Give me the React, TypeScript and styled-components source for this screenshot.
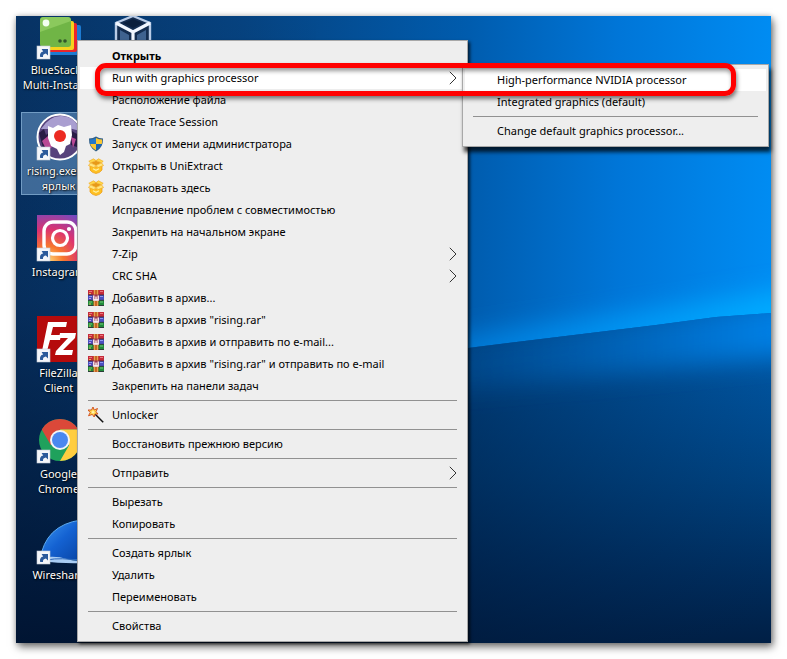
import React from "react";
import styled, { createGlobalStyle, css } from "styled-components";

const GlobalStyle = createGlobalStyle`
  * { box-sizing: border-box; }
  body { margin: 0; background: #fff; font-family: "Noto Sans", "Open Sans", sans-serif; font-size: 11px; }
  button { font: inherit; color: inherit; border: 0; background: none; padding: 0; }
`;

const Page = styled.main`
  display: flex;
  min-height: 100vh;
  padding: 16px;
`;

const Desktop = styled.section`
  position: relative;
  flex: 1;
  min-width: 0;
  background: #00254f;
  box-shadow: 2px 4px 8px rgba(0, 0, 0, 0.55), 0 0 5px rgba(0, 0, 0, 0.2);
`;

const Wallpaper = styled.svg`
  position: absolute;
  inset: 0;
  width: 100%;
  height: 100%;
  display: block;
`;

const IconArea = styled.div`
  position: relative;
  height: 627px;
  overflow: hidden;
  display: flex;
  align-items: flex-end;
`;

const IconGrid = styled.div`
  display: grid;
  grid-template-columns: 75px 75px;
  grid-auto-rows: 83px;
  row-gap: 18px;
  padding: 0 5px 44px;
`;

const Shortcut = styled.button<{ $selected?: boolean; $column: number }>`
  grid-column: ${(p) => p.$column};
  display: flex;
  flex-direction: column;
  align-items: center;
  gap: 2px;
  border: 1px solid transparent;
  ${(p) =>
    p.$selected &&
    css`
      background: rgba(130, 175, 220, 0.45);
      border-color: rgba(150, 190, 225, 0.6);
    `}
`;

const Picture = styled.svg`
  width: 48px;
  height: 48px;
  flex: none;
`;

const Caption = styled.span`
  color: #fff;
  line-height: 15px;
  text-align: center;
  white-space: pre;
  text-shadow: 1px 1px 2px #000, 0 0 1px #000;
`;

const panel = css`
  position: absolute;
  margin: 0;
  padding: 4px 2px;
  list-style: none;
  background: #eee;
  border: 1px solid #a8a8a8;
  color: #000;
`;

const Menu = styled.ul`
  ${panel}
  left: 61px;
  top: 24px;
  width: 391px;
  box-shadow: 2px 2px 3px rgba(0, 0, 0, 0.7);
`;

const Submenu = styled.ul`
  ${panel}
  left: 382px;
  top: -3px;
  width: 307px;
  box-shadow: 2px 5px 4px rgba(0, 0, 0, 0.75);
`;

const Entry = styled.li`
  position: relative;
`;

const Item = styled.button<{ $hot?: boolean; $bold?: boolean }>`
  display: grid;
  grid-template-columns: 16px 1fr 8px;
  column-gap: 8px;
  align-items: center;
  width: 100%;
  height: 22px;
  padding: 0 8px;
  line-height: 22px;
  text-align: left;
  white-space: nowrap;
  background: ${(p) => (p.$hot ? "#fff" : "transparent")};
  font-weight: ${(p) => (p.$bold ? 700 : 400)};
`;

const Glyph = styled.svg`
  width: 16px;
  height: 16px;
  grid-column: 1;
`;

const Text = styled.span`
  grid-column: 2;
`;

const Chevron = styled.svg`
  width: 8px;
  height: 14px;
  grid-column: 3;
`;

const Separator = styled.li`
  height: 1px;
  margin: 3px 8px;
  background: #919191;
`;

const Highlight = styled.div`
  position: absolute;
  left: 79px;
  top: 47px;
  width: 641px;
  height: 33px;
  border: 5px solid #ff0000;
  border-radius: 11px;
  pointer-events: none;
  box-shadow: 1px 3px 4px rgba(0, 0, 0, 0.5), inset 1px 3px 4px rgba(0, 0, 0, 0.4);
`;

const Arrow = () => (
  <g>
    <rect x="2" y="34" width="13" height="13" fill="#f4f6fa" stroke="#c4cbd6" strokeWidth=".6" />
    <path d="M5.2 45C4.5 41.5 6 39.8 8.2 39.4L6.6 37H13V43.4L10.9 41.6C8.8 42 7.8 43 8 45Z" fill="#2b5a9b" />
  </g>
);

const BlueStacks = () => (
  <Picture viewBox="0 0 48 48">
    <rect x="12" y="13" width="34" height="30" rx="2" fill="#1d7bd2" />
    <rect x="9" y="11" width="33" height="29" rx="2" fill="#e9262c" />
    <rect x="7" y="9" width="32" height="29" rx="2" fill="#f6d21d" />
    <rect x="5" y="5" width="31" height="30" rx="3" fill="#70b546" />
    <path d="M5 9Q5 5 9 5H32Q36 5 36 9L5 20Z" fill="#8bc95d" />
    <circle cx="11" cy="11" r="3.4" fill="#f3fff0" />
    <circle cx="25" cy="29" r="1.8" fill="#31552a" />
    <circle cx="30" cy="29" r="1.8" fill="#31552a" />
    <Arrow />
  </Picture>
);

const VirtualBox = () => (
  <Picture viewBox="0 0 48 48">
    <path d="M23 4L40 11V34L23 46L6 34V11Z" fill="#142d50" stroke="#b8cbe6" strokeWidth="2.4" />
    <path d="M6 11L23 20L40 11M23 20V46" fill="none" stroke="#f2f7ff" strokeWidth="3.2" />
    <path d="M10 18L19 23V36L10 30ZM36 18L27 23V36L36 30Z" fill="#3f628f" />
    <path d="M13 11L23 7L33 11L23 16Z" fill="#0b1f3c" />
  </Picture>
);

const Rising = () => (
  <Picture viewBox="0 0 48 48">
    <circle cx="25" cy="24" r="22.5" fill="#57437c" stroke="#fff" strokeWidth="2" />
    <path d="M6 16Q15 2 27 3Q41 4 45 18L30 14L18 16Z" fill="#a99ed0" />
    <path d="M4 20L9 16L11 22L16 18L14 31L8 35ZM34 16L40 20L45 22L42 34L36 32Z" fill="#291c45" />
    <path d="M7 28L13 23L17 34L12 38ZM36 24L41 26L38 35Z" fill="#b84995" />
    <path d="M13 13L18 15L23 12L29 14L36 12L37 22L35 31L31 33L29 39L25 42L22 36L16 33L13 25Z" fill="#fff" />
    <circle cx="25" cy="23" r="6" fill="#ec2b22" />
    <Arrow />
  </Picture>
);

const Instagram = () => (
  <Picture viewBox="0 0 48 48">
    <defs>
      <radialGradient id="insta" cx=".25" cy="1" r="1.15">
        <stop offset="0" stopColor="#fed576" />
        <stop offset=".28" stopColor="#f7772e" />
        <stop offset=".6" stopColor="#dc3270" />
        <stop offset="1" stopColor="#724bc2" />
      </radialGradient>
    </defs>
    <rect x="2" y="1" width="46" height="46" fill="url(#insta)" />
    <rect x="9" y="8" width="32" height="32" rx="9" fill="none" stroke="#fff" strokeWidth="3.4" />
    <circle cx="25" cy="24" r="7.5" fill="none" stroke="#fff" strokeWidth="3.2" />
    <circle cx="34" cy="15" r="2.1" fill="#fff" />
    <Arrow />
  </Picture>
);

const FileZilla = () => (
  <Picture viewBox="0 0 48 48">
    <rect x="2" y="1" width="46" height="46" fill="#b50b0c" />
    <path d="M13 7H32L31 12H18L16 20H26L25 25H15L12 36H7Z" fill="#fff" />
    <path d="M25 18H41L40 23L28 35H38L37 40H20L21 36L33 23H24Z" fill="#fff" />
    <Arrow />
  </Picture>
);

const Chrome = () => (
  <Picture viewBox="0 0 48 48">
    <circle cx="25" cy="24" r="21" fill="#1fa15c" />
    <path d="M6.8 13.5A21 21 0 0 1 43.2 13.5H25L15.9 29.2Z" fill="#db4839" />
    <path d="M43.2 13.5A21 21 0 0 1 25 45L34.1 29.2L25 13.5Z" fill="#ffcd40" />
    <circle cx="25" cy="24" r="10" fill="#f2f4f6" />
    <circle cx="25" cy="24" r="8" fill="#4a88ef" />
    <Arrow />
  </Picture>
);

const Wireshark = () => (
  <Picture viewBox="0 0 48 48">
    <defs>
      <linearGradient id="fin" x1="0" y1="0" x2="1" y2="1">
        <stop offset="0" stopColor="#3f9af2" />
        <stop offset=".5" stopColor="#1462d2" />
        <stop offset="1" stopColor="#0844a4" />
      </linearGradient>
    </defs>
    <path d="M5 43Q10 8 46 3Q41 17 47 43Z" fill="url(#fin)" stroke="#5ca9ee" strokeWidth="1" />
    <path d="M5 41Q20 38 32 42T48 42V46Q30 47 5 44Z" fill="#a9cdf4" />
    <path d="M12 43Q26 40 47 44" fill="none" stroke="#2b67b9" strokeWidth="1" />
    <Arrow />
  </Picture>
);

const Shield = () => (
  <Glyph viewBox="0 0 16 16">
    <path d="M8 .6Q11 2.6 15 2.6Q15.3 12 8 15.6Q.7 12 1 2.6Q5 2.6 8 .6Z" fill="#315f87" />
    <path d="M8 2V8H2.2Q1.8 6 2 3.6Q5 3.6 8 2Z" fill="#2478c9" />
    <path d="M8 2Q11 3.6 14 3.6Q14.2 6 13.8 8H8Z" fill="#fbc832" />
    <path d="M2.2 8H8V14.3Q3.6 12 2.2 8Z" fill="#fbc832" />
    <path d="M8 8H13.8Q12.4 12 8 14.3Z" fill="#1b66b6" />
  </Glyph>
);

const Carton = () => (
  <Glyph viewBox="0 0 16 16">
    <path d="M2 7L8 9L14 7V12Q12 15 8 15.5Q4 15 2 12Z" fill="#ffc022" stroke="#e8960f" strokeWidth=".7" />
    <path d="M2.5 4.8L8 2.8L13.5 4.8L8 7.5Z" fill="#e79a18" />
    <path d="M2.5 4.8L.5 7.5L6 9.6L8 7.5ZM13.5 4.8L15.5 7.5L10 9.6L8 7.5Z" fill="#ffe680" stroke="#f2ac22" strokeWidth=".7" />
    <path d="M2.5 4.8L.8 3.3L5.5 .8L8 2.6ZM13.5 4.8L15.2 3.3L10.5 .8L8 2.6Z" fill="#ffd84a" stroke="#f2ac22" strokeWidth=".7" />
    <path d="M5 10.8L8 12.3L11 10.8" fill="none" stroke="#fff1a3" strokeWidth="1.2" />
  </Glyph>
);

const Books = () => (
  <Glyph viewBox="0 0 16 16">
    <rect width="16" height="5" y="0" fill="#c52a3a" />
    <rect width="16" height="5" y="5" fill="#4a4fc0" />
    <rect width="16" height="6" y="10" fill="#218a3a" />
    <path d="M0 5H16M0 10.3H16M0 15.5H16" stroke="#302838" strokeWidth=".8" />
    <path d="M1 1.5H4M12 1.5H15" stroke="#e8777c" />
    <path d="M1 6.5H4M12 6.5H15" stroke="#8f9af0" />
    <path d="M1 12H4M12 12H15" stroke="#72cc78" />
    <rect x="1" y="3" width="2" height="1" fill="#e7b454" />
    <rect x="1" y="8" width="2" height="1" fill="#c69bdc" />
    <rect x="1" y="13.5" width="2" height="1" fill="#dbc65d" />
    <rect x="5.5" width="5" height="16" fill="#c86626" />
    <path d="M6.5 0V5M9.5 0V5M6.5 11V16M9.5 11V16" stroke="#edb05f" strokeWidth=".8" />
    <rect x="4.8" y="4.5" width="6.4" height="6.5" fill="#a03a50" />
    <path d="M5.8 5.5V10H10.2V5.5M8 6.5V10" fill="none" stroke="#fff" strokeWidth="1.3" />
  </Glyph>
);

const Wand = () => (
  <Glyph viewBox="0 0 16 16">
    <path d="M6.5 6.5L15.2 15.2" stroke="#111" strokeWidth="1.6" />
    <path d="M7.5 6.5L15 14" stroke="#999" strokeWidth=".5" />
    <path d="M5 0L6.2 3L9.5 1.5L8 4.7L10 7L7 7L6.2 10L4.3 7.4L.5 8.8L2.2 5.5L0 3L3.5 3Z" fill="#ffd54a" stroke="#cf4a1d" strokeWidth=".9" />
    <path d="M5 3L5.6 4.6L7 5L5.5 6L5 7L4 5.5L3 5L4.4 4.4Z" fill="#fff7b8" />
  </Glyph>
);

const Expand = () => (
  <Chevron viewBox="0 0 8 14">
    <path d="M.8 .8L7 7L.8 13.2" fill="none" stroke="#333" strokeWidth="1" />
  </Chevron>
);

type IconKind = "shield" | "carton" | "books" | "wand";
const glyphs: Record<IconKind, React.FC> = { shield: Shield, carton: Carton, books: Books, wand: Wand };

type MenuRow = "-" | { label: string; icon?: IconKind; arrow?: boolean; bold?: boolean; hot?: boolean; children?: MenuRow[] };

const menu: MenuRow[] = [
  { label: "Открыть", bold: true },
  {
    label: "Run with graphics processor",
    arrow: true,
    hot: true,
    children: [
      { label: "High-performance NVIDIA processor", hot: true },
      { label: "Integrated graphics (default)" },
      "-",
      { label: "Change default graphics processor..." },
    ],
  },
  { label: "Расположение файла" },
  { label: "Create Trace Session" },
  { label: "Запуск от имени администратора", icon: "shield" },
  { label: "Открыть в UniExtract", icon: "carton" },
  { label: "Распаковать здесь", icon: "carton" },
  { label: "Исправление проблем с совместимостью" },
  { label: "Закрепить на начальном экране" },
  { label: "7-Zip", arrow: true },
  { label: "CRC SHA", arrow: true },
  { label: "Добавить в архив...", icon: "books" },
  { label: 'Добавить в архив "rising.rar"', icon: "books" },
  { label: "Добавить в архив и отправить по e-mail...", icon: "books" },
  { label: 'Добавить в архив "rising.rar" и отправить по e-mail', icon: "books" },
  { label: "Закрепить на панели задач" },
  "-",
  { label: "Unlocker", icon: "wand" },
  "-",
  { label: "Восстановить прежнюю версию" },
  "-",
  { label: "Отправить", arrow: true },
  "-",
  { label: "Вырезать" },
  { label: "Копировать" },
  "-",
  { label: "Создать ярлык" },
  { label: "Удалить" },
  { label: "Переименовать" },
  "-",
  { label: "Свойства" },
];

function Rows({ rows }: { rows: MenuRow[] }) {
  return (
    <>
      {rows.map((row, i) => {
        if (row === "-") return <Separator key={i} role="separator" />;
        const Icon = row.icon && glyphs[row.icon];
        return (
          <Entry key={i} role="none">
            <Item role="menuitem" $hot={row.hot} $bold={row.bold} aria-haspopup={row.arrow ? "menu" : undefined}>
              {Icon && <Icon />}
              <Text>{row.label}</Text>
              {row.arrow && <Expand />}
            </Item>
            {row.children && (
              <Submenu role="menu">
                <Rows rows={row.children} />
              </Submenu>
            )}
          </Entry>
        );
      })}
    </>
  );
}

const shortcuts: { name: string; caption?: string; Icon: React.FC; column?: number; selected?: boolean }[] = [
  { name: "BlueStacks", caption: "BlueStacks\nMulti-Instan...", Icon: BlueStacks },
  { name: "VirtualBox", Icon: VirtualBox, column: 2 },
  { name: "rising", caption: "rising.exe —\nярлык", Icon: Rising, selected: true },
  { name: "Instagram", caption: "Instagram", Icon: Instagram },
  { name: "FileZilla", caption: "FileZilla\nClient", Icon: FileZilla },
  { name: "Chrome", caption: "Google\nChrome", Icon: Chrome },
  { name: "Wireshark", caption: "Wireshark", Icon: Wireshark },
];

const Scenery = () => (
  <Wallpaper viewBox="0 0 755 627" preserveAspectRatio="none" aria-hidden="true">
    <defs>
      <linearGradient id="sky" x1="0" x2="1" y1="0" y2="0">
        <stop offset="0" stopColor="#073263" />
        <stop offset=".3" stopColor="#06427f" />
        <stop offset=".6" stopColor="#005cae" />
        <stop offset=".8" stopColor="#0076d8" />
        <stop offset="1" stopColor="#008cf2" />
      </linearGradient>
      <linearGradient id="ground" x1="0" x2="0" y1="297" y2="627" gradientUnits="userSpaceOnUse">
        <stop offset="0" stopColor="#0060b4" />
        <stop offset=".22" stopColor="#00519a" />
        <stop offset=".5" stopColor="#00427f" />
        <stop offset=".8" stopColor="#002c5c" />
        <stop offset="1" stopColor="#001f45" />
      </linearGradient>
      <linearGradient id="shade" x1="452" x2="755" y1="0" y2="0" gradientUnits="userSpaceOnUse">
        <stop offset="0" stopColor="#00183a" stopOpacity=".45" />
        <stop offset="1" stopColor="#00214a" stopOpacity="0" />
      </linearGradient>
      <linearGradient id="dusk" x1="0" x2="0" y1="0" y2="1">
        <stop offset="0" stopColor="#001330" stopOpacity="0" />
        <stop offset=".45" stopColor="#001330" stopOpacity=".15" />
        <stop offset="1" stopColor="#001330" stopOpacity=".95" />
      </linearGradient>
      <linearGradient id="beam" x1="452" x2="755" y1="0" y2="0" gradientUnits="userSpaceOnUse">
        <stop offset="0" stopColor="#008cf0" stopOpacity=".6" />
        <stop offset="1" stopColor="#00aaff" stopOpacity="1" />
      </linearGradient>
      <linearGradient id="reflection" x1="452" x2="755" y1="0" y2="0" gradientUnits="userSpaceOnUse">
        <stop offset="0" stopColor="#0062b8" stopOpacity=".3" />
        <stop offset="1" stopColor="#0083ea" stopOpacity=".9" />
      </linearGradient>
      <clipPath id="above"><path d="M300 0H755V297L700 301L640 309L452 332L300 350Z" /></clipPath>
      <clipPath id="below"><path d="M755 297L700 301L640 309L452 332L300 350V627H755Z" /></clipPath>
      <filter id="soft" x="-20%" y="-80%" width="140%" height="260%"><feGaussianBlur stdDeviation="12" /></filter>
    </defs>
    <rect width="755" height="627" fill="url(#sky)" />
    <rect width="300" height="627" fill="url(#dusk)" />
    <g clipPath="url(#above)">
      <path d="M380 345L452 318L800 270V320L452 355Z" fill="url(#beam)" filter="url(#soft)" />
    </g>
    <g clipPath="url(#below)">
      <rect x="300" y="290" width="455" height="337" fill="url(#ground)" />
      <rect x="300" y="290" width="455" height="337" fill="url(#shade)" />
      <path d="M420 330L820 280V334L420 378Z" fill="url(#reflection)" filter="url(#soft)" />
    </g>
  </Wallpaper>
);

export default function App() {
  return (
    <>
      <GlobalStyle />
      <Page>
        <Desktop>
          <Scenery />
          <IconArea>
            <IconGrid>
              {shortcuts.map(({ name, caption, Icon, column = 1, selected }) => (
                <Shortcut key={name} aria-label={name} $column={column} $selected={selected}>
                  <Icon />
                  {caption && <Caption>{caption}</Caption>}
                </Shortcut>
              ))}
            </IconGrid>
          </IconArea>
          <Menu role="menu">
            <Rows rows={menu} />
          </Menu>
          <Highlight />
        </Desktop>
      </Page>
    </>
  );
}
